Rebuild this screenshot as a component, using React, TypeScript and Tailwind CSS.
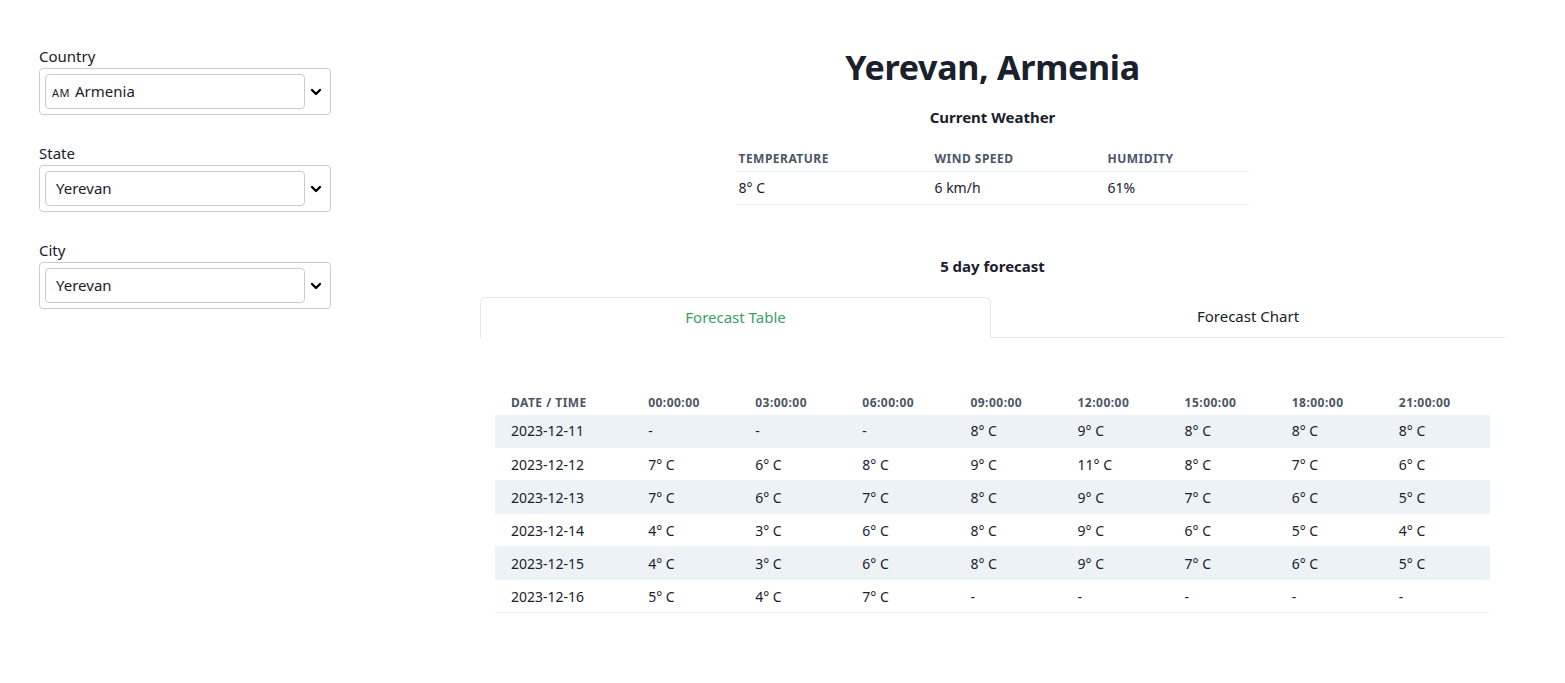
import React from "react";

const font = { fontFamily: '"Noto Sans", "Open Sans", sans-serif' };

function Chevron() {
  return (
    <svg width="16" height="16" viewBox="0 0 24 24" fill="none" stroke="#000" strokeWidth="3.5" strokeLinecap="round" strokeLinejoin="round">
      <path d="M6 9l6 6 6-6" />
    </svg>
  );
}

function SelectBox({ label, children, first }: { label: string; children: React.ReactNode; first?: boolean }) {
  return (
    <div className={first ? "" : "mt-[29px]"}>
      <div className="text-[15px] leading-[19px] mb-[2px] text-[#1a202c]">{label}</div>
      <div className="flex items-center h-[47px] border border-[#cccccc] rounded-[4px] pl-[5px] pr-[6px]">
        <div className="flex-1 h-[35px] border border-[#cccccc] rounded-[4px] flex items-center text-[15px] text-[#1a202c]">
          {children}
        </div>
        <div className="ml-[3px] w-[16px] flex justify-center">
          <Chevron />
        </div>
      </div>
    </div>
  );
}

const times = ["00:00:00", "03:00:00", "06:00:00", "09:00:00", "12:00:00", "15:00:00", "18:00:00", "21:00:00"];
const colW = [107, 107, 108, 107, 107, 107, 107, 91];
const rows: [string, string[]][] = [
  ["2023-12-11", ["-", "-", "-", "8° C", "9° C", "8° C", "8° C", "8° C"]],
  ["2023-12-12", ["7° C", "6° C", "8° C", "9° C", "11° C", "8° C", "7° C", "6° C"]],
  ["2023-12-13", ["7° C", "6° C", "7° C", "8° C", "9° C", "7° C", "6° C", "5° C"]],
  ["2023-12-14", ["4° C", "3° C", "6° C", "8° C", "9° C", "6° C", "5° C", "4° C"]],
  ["2023-12-15", ["4° C", "3° C", "6° C", "8° C", "9° C", "7° C", "6° C", "5° C"]],
  ["2023-12-16", ["5° C", "4° C", "7° C", "-", "-", "-", "-", "-"]],
];

const th = "h-[24px] text-left text-[12px] font-bold uppercase tracking-[0.04em] text-[#4a5568]";

export default function App() {
  return (
    <div className="w-[1565px] h-[683px] bg-white flex text-[#1a202c]" style={font}>
      <div className="w-[292px] ml-[39px] pt-[47px] shrink-0">
        <SelectBox label="Country" first>
          <span className="ml-[6px]">
            <span className="text-[11px] tracking-[0.5px] mr-[5px]">AM</span>Armenia
          </span>
        </SelectBox>
        <SelectBox label="State">
          <span className="ml-[10px]">Yerevan</span>
        </SelectBox>
        <SelectBox label="City">
          <span className="ml-[10px]">Yerevan</span>
        </SelectBox>
      </div>

      <div className="w-[1025px] ml-[149px] pt-[45px] flex flex-col items-center">
        <h1 className="text-[34px] leading-[44px] font-bold tracking-[-0.3px]">Yerevan, Armenia</h1>
        <h2 className="mt-[16px] text-[15px] leading-[24px] font-bold">Current Weather</h2>
        <table className="mt-[18px] w-[512px] border-collapse table-fixed">
          <colgroup>
            <col className="w-[198px]" />
            <col className="w-[173px]" />
            <col />
          </colgroup>
          <thead>
            <tr>
              <th className={th + " pl-[2px] border-b border-[#edf2f7]"}>Temperature</th>
              <th className={th + " border-b border-[#edf2f7]"}>Wind Speed</th>
              <th className={th + " border-b border-[#edf2f7]"}>Humidity</th>
            </tr>
          </thead>
          <tbody>
            <tr>
              <td className="pl-[2px] h-[33px] text-[14px] border-b border-[#edf2f7]">8° C</td>
              <td className="h-[33px] text-[14px] border-b border-[#edf2f7]">6 km/h</td>
              <td className="h-[33px] text-[14px] border-b border-[#edf2f7]">61%</td>
            </tr>
          </tbody>
        </table>

        <h2 className="mt-[49px] text-[15px] leading-[24px] font-bold">5 day forecast</h2>

        <div className="mt-[19px] w-full flex h-[41px]">
          <div className="w-[511px] flex items-center justify-center border border-b-0 border-[#e2e8f0] rounded-t-[6px] text-[15px] text-[#38a169]">
            Forecast Table
          </div>
          <div className="flex-1 flex items-center justify-center border-b border-[#e2e8f0] text-[15px] text-[#1a202c]">
            Forecast Chart
          </div>
        </div>

        <div className="w-full px-[15px] pt-[53px]">
          <table className="w-full border-collapse table-fixed">
            <colgroup>
              <col className="w-[153px]" />
              {colW.map((w, i) => (
                <col key={i} style={{ width: w }} />
              ))}
            </colgroup>
            <thead>
              <tr>
                <th className={th + " pl-[16px]"}>Date / Time</th>
                {times.map((t) => (
                  <th key={t} className={th}>{t}</th>
                ))}
              </tr>
            </thead>
            <tbody>
              {rows.map(([d, vals], i) => (
                <tr key={d} className={i % 2 === 0 ? "bg-[#edf2f7]" : ""}>
                  <td className="h-[33px] pl-[16px] text-[14px] border-b border-[#edf2f7]">{d}</td>
                  {vals.map((v, j) => (
                    <td key={j} className="h-[33px] text-[14px] border-b border-[#edf2f7]">{v}</td>
                  ))}
                </tr>
              ))}
            </tbody>
          </table>
        </div>
      </div>
    </div>
  );
}
